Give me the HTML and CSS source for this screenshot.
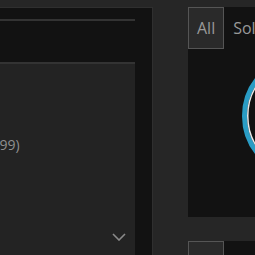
FILE: index.html
```html
<!DOCTYPE html>
<html lang="en">
<head>
  <meta charset="UTF-8">
  <title>Library</title>
  <link rel="stylesheet" href="styles.css">
</head>
<body>

  <div class="layout">
    <aside class="sidebar">
      <div class="sidebar-head"></div>
      <div class="list">
        <div class="list-item list-item-current"></div>
        <div class="list-item list-item-open">
          <span class="list-title">Released (1999)</span>
          <svg class="chevron" width="14" height="8" viewBox="0 0 14 8">
            <polyline points="1,1 7,7 13,1" fill="none" stroke="#8a8a8a" stroke-width="1.6"/>
          </svg>
        </div>
      </div>
    </aside>

    <main class="panels">
      <section class="panel">
        <div class="tabs">
          <span class="tab tab-active">All</span>
          <span class="tab">Solo</span>
          <span class="tab">Duo</span>
        </div>
        <div class="panel-body">
          <svg class="ring" width="124" height="124" viewBox="0 0 124 124">
            <circle cx="62" cy="62" r="59.5" fill="#121212" stroke="#2a9cc4" stroke-width="5"/>
            <circle cx="62" cy="62" r="56.25" fill="none" stroke="#e8e8e8" stroke-width="1.5"/>
          </svg>
        </div>
      </section>

      <section class="panel">
        <div class="tabs">
          <span class="tab tab-active">All</span>
          <span class="tab">Solo</span>
          <span class="tab">Duo</span>
        </div>
      </section>
    </main>
  </div>

</body>
</html>
```

FILE: styles.css
```css
* {
  box-sizing: border-box;
}
body {
  margin: 0;
  height: 255px;
  overflow: hidden;
  background-color: #262626;
  font-family: "Open Sans", sans-serif;
}
.layout {
  display: flex;
  align-items: flex-start;
  gap: 35px;
  padding-top: 7px;
}
.sidebar {
  flex: none;
  width: 252px;
  height: 270px;
  margin-left: -99px;
  padding-right: 17px;
  background: #121212;
  border-top: 1px solid #2f2f2f;
  border-right: 1px solid #2f2f2f;
}
.sidebar-head {
  height: 11px;
}
.list-item {
  border-top: 2px solid #333;
}
.list-item-current {
  height: 43px;
}
.list-item-open {
  display: flex;
  flex-direction: column;
  height: 200px;
  padding: 71px 9px 21px 16px;
  background: #232323;
}
.list-title {
  font-size: 14px;
  line-height: 20px;
  color: #8f8f8f;
  white-space: nowrap;
}
.chevron {
  display: block;
  margin-top: auto;
  align-self: flex-end;
}
.panels {
  flex: none;
  width: 232px;
  display: flex;
  flex-direction: column;
  gap: 24px;
}
.panel {
  background: #121212;
}
.tabs {
  display: flex;
}
.tab {
  height: 42px;
  padding: 0 8px;
  line-height: 40px;
  font-size: 16px;
  color: #999;
  border: 1px solid transparent;
}
.tab-active {
  background: #2a2a2a;
  border-color: #555;
}
.panel-body {
  height: 168px;
  display: flex;
  justify-content: center;
  align-items: flex-start;
  padding-top: 5px;
}
.ring {
  display: block;
}
```
